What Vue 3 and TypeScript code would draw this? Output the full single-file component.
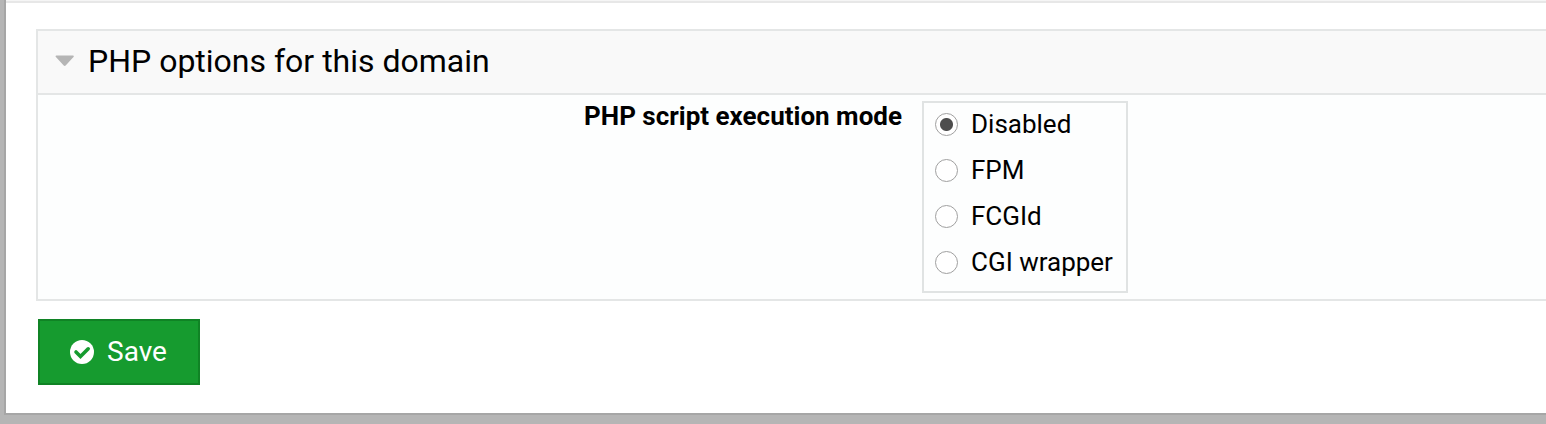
<script setup lang="ts">
import { ref } from 'vue'

interface ExecutionMode {
  value: string
  label: string
}

const modes: ExecutionMode[] = [
  { value: 'none', label: 'Disabled' },
  { value: 'fpm', label: 'FPM' },
  { value: 'fcgid', label: 'FCGId' },
  { value: 'cgi', label: 'CGI wrapper' },
]

const selected = ref('none')
const open = ref(true)
</script>

<template>
  <main class="panel">
    <div class="panel-head"></div>
    <form class="content" @submit.prevent>
      <section class="options">
        <h2 class="heading">
          <button class="toggle" type="button" :aria-expanded="open" @click="open = !open">
            <svg class="caret" viewBox="0 0 20 12" aria-hidden="true">
              <path d="M1.4 0.5H18C18.9 0.5 19.1 1.4 18.5 2L10.9 10.3Q9.7 11.5 8.5 10.3L0.9 2C0.3 1.4 0.5 0.5 1.4 0.5Z" />
            </svg>
            <span>PHP options for this domain</span>
          </button>
        </h2>
        <div v-if="open" class="row">
          <span id="mode-label" class="row-label">PHP script execution mode</span>
          <div class="choices" role="radiogroup" aria-labelledby="mode-label">
            <label v-for="mode in modes" :key="mode.value" class="choice">
              <input v-model="selected" class="radio" type="radio" name="mode" :value="mode.value" />
              <span class="choice-text">{{ mode.label }}</span>
            </label>
          </div>
        </div>
      </section>
      <button class="save" type="submit">
        <svg class="check" viewBox="0 0 24 24" aria-hidden="true">
          <circle cx="12" cy="12" r="12" fill="#fff" />
          <path d="M6 12L10.5 16.5L18.2 8.8" fill="none" stroke="#169b2f" stroke-width="3.6" stroke-linecap="round" />
        </svg>
        <span>Save</span>
      </button>
    </form>
  </main>
</template>

<style>
body {
  margin: 0;
  background: #b5b5b5;
}
</style>

<style scoped>
.panel {
  box-sizing: border-box;
  margin: 0 0 9px 4px;
  border-left: 2px solid #a6a6a6;
  border-bottom: 2px solid #a6a6a6;
  background: #fff;
  color: #000;
  font-family: Roboto, "Liberation Sans", sans-serif;
}

.panel-head {
  height: 1px;
  background: #f5f5f5;
  border-bottom: 2px solid #e7e7e7;
}

.content {
  padding: 26px 0 28px 30px;
}

.options {
  border: 2px solid #e4e6e6;
  border-right: 0;
  background: #fdfefe;
}

.heading {
  margin: 0;
  border-bottom: 2px solid #e4e6e6;
  background: #f9f9f9;
  font-size: 32px;
  font-weight: 400;
}

.toggle {
  display: flex;
  align-items: center;
  gap: 13px;
  width: 100%;
  padding: 10px 17px 12px;
  border: 0;
  background: none;
  color: inherit;
  font: inherit;
  line-height: 40px;
  cursor: pointer;
}

.caret {
  width: 20px;
  height: 12px;
  fill: #b5b5b5;
}

.row {
  display: grid;
  grid-template-columns: 18fr 13fr;
  column-gap: 20px;
  align-items: start;
  padding: 6px 0;
  font-size: 26px;
  line-height: 30px;
}

.row-label {
  font-weight: 700;
  text-align: right;
}

.choices {
  display: grid;
  row-gap: 3px;
  justify-self: start;
  padding: 0 13px 7px 11px;
  border: 2px solid #e0e3e3;
}

.choice {
  display: flex;
  align-items: center;
  gap: 13px;
  height: 43px;
}

.choice-text {
  padding-bottom: 1px;
}

.radio {
  appearance: none;
  width: 23px;
  height: 23px;
  margin: 0;
  border: 1px solid #a0a0a0;
  border-radius: 50%;
  background: #fff;
}

.radio:checked {
  background: radial-gradient(circle, #4d4d4d 6px, #fff 7px);
}

.save {
  display: flex;
  align-items: center;
  gap: 13px;
  margin: 18px 0 0 2px;
  padding: 15px 31px 15px 30px;
  border: 2px solid #108325;
  background: #169b2f;
  color: #fff;
  font-family: inherit;
  font-size: 28px;
  line-height: 32px;
  cursor: pointer;
}

.check {
  width: 24px;
  height: 24px;
}
</style>
